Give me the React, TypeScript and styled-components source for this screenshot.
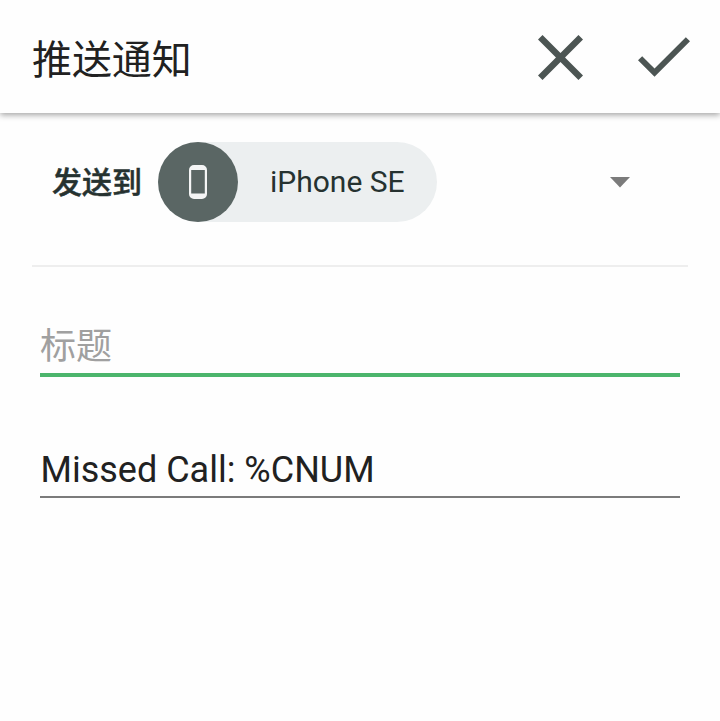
import React from "react";
import styled, { createGlobalStyle } from "styled-components";

const Global = createGlobalStyle`
  * { box-sizing: border-box; }
  body { margin: 0; background: #fff; font-family: Roboto, "Noto Sans CJK SC", sans-serif; color: #212121; }
`;
const Screen = styled.main`
  width: 720px; height: 721px; overflow: hidden; background: #fefefe;
`;
const Header = styled.header`
  height: 113px; padding: 0 30px 0 32px; display: flex; align-items: center; background: #fefefe;
  box-shadow: 0 2px 6px rgba(0,0,0,.36);
`;
const Title = styled.h1`
  margin: 8px auto 0 0; font-size: 40px; line-height: 60px; font-weight: 400; letter-spacing: -0.1px;
`;
const IconButton = styled.button<{ $gap?: number; $drop: number }>`
  display: flex; padding: 0; border: 0; background: none; margin: ${p => p.$drop}px ${p => p.$gap ?? 0}px 0 0;
`;
const SendRow = styled.section`
  height: 154px; margin: 0 32px; padding: 28.5px 0 0 20px; display: flex; align-items: flex-start;
  border-bottom: 2px solid #eee;
`;
const Label = styled.span`
  width: 106px; padding-top: 1px; font-size: 30px; font-weight: 500; line-height: 80px; color: #263230;
  -webkit-text-stroke: 0.5px #263230;
`;
const Chip = styled.div`
  width: 279px; height: 80px; border-radius: 40px; background: #eceff0; display: flex; align-items: center;
  margin-right: auto;
`;
const Avatar = styled.span`
  width: 80px; height: 80px; border-radius: 50%; background: #5a6664; display: flex; align-items: center; justify-content: center;
`;
const Device = styled.span`
  margin-left: 32px; padding-top: 1px; font-size: 30px; line-height: 80px; white-space: nowrap; color: #263230;
`;
const Arrow = styled.svg`
  display: block; margin: 35px 58px 0 0;
`;
const Field = styled.div<{ $active?: boolean; $top: number; $height: number }>`
  margin: ${p => p.$top}px 40px 0; height: ${p => p.$height}px; font-size: 36px; line-height: 54px;
  padding-top: ${p => (p.$active ? 2 : 1)}px;
  text-indent: ${p => (p.$active ? 0 : 0.5)}px;
  color: ${p => (p.$active ? "#a0a0a0" : "#212121")};
  border-bottom: ${p => (p.$active ? "4px solid #4cb56c" : "2px solid #7b7b7b")};
`;

export default function App() {
  return (
    <Screen>
      <Global />
      <Header>
        <Title>推送通知</Title>
        <IconButton $gap={55.5} $drop={2} aria-label="关闭">
          <svg width="45" height="45" viewBox="5 5 14 14"><path fill="#4c5553" d="M19 6.41 17.59 5 12 10.59 6.41 5 5 6.41 10.59 12 5 17.59 6.41 19 12 13.41 17.59 19 19 17.59 13.41 12Z" /></svg>
        </IconButton>
        <IconButton $drop={0.5} aria-label="确认">
          <svg width="52" height="40" viewBox="3.41 5.59 17.59 13.41"><path fill="#4c5553" d="M9 16.17 4.83 12l-1.42 1.41L9 19 21 7l-1.41-1.41Z" /></svg>
        </IconButton>
      </Header>
      <SendRow>
        <Label>发送到</Label>
        <Chip>
          <Avatar>
            <svg width="18" height="34" viewBox="0 0 18 34"><path fill="#f4f5f5" fillRule="evenodd" d="M5 0h8a5 5 0 0 1 5 5v24a5 5 0 0 1-5 5H5a5 5 0 0 1-5-5V5a5 5 0 0 1 5-5ZM2.2 5v23.5h13.6V5Z" /></svg>
          </Avatar>
          <Device>iPhone SE</Device>
        </Chip>
        <Arrow width="20" height="11" viewBox="0 0 20 11"><path d="M0 0h20L10 10.5Z" fill="#7b7b7b" /></Arrow>
      </SendRow>
      <Field $active $top={51} $height={59}>标题</Field>
      <Field $top={65} $height={55.5}>Missed Call: %CNUM</Field>
    </Screen>
  );
}
